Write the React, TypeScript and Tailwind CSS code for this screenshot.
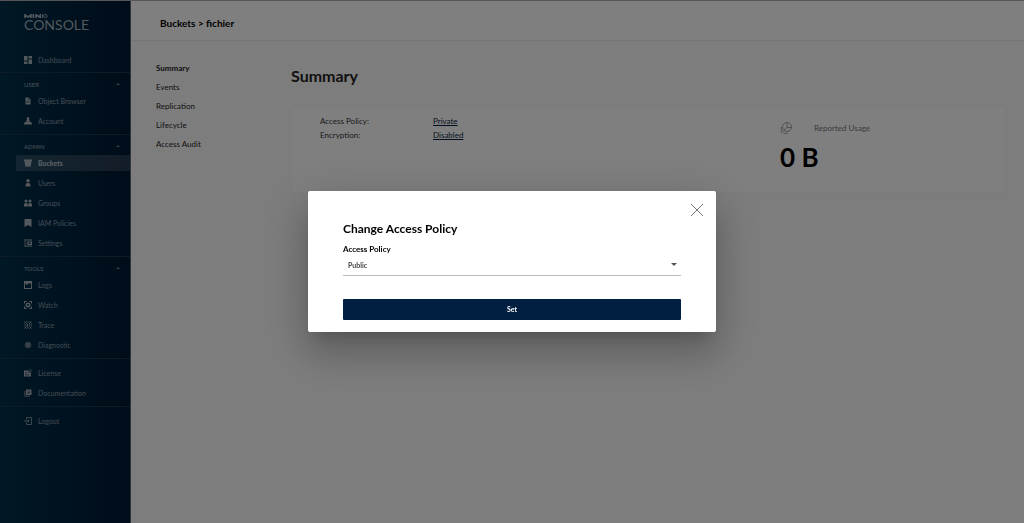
import { useState } from 'react';
import type { FormEvent, ReactNode } from 'react';

interface MenuItem {
  label: string;
  icon: ReactNode;
  active?: boolean;
}

interface MenuSection {
  title?: string;
  items: MenuItem[];
}

const MENU_SECTIONS: MenuSection[] = [
  {
    title: 'USER',
    items: [
      {
        label: 'Object Browser',
        icon: <path fillRule="evenodd" d="M3 1h6l4 4v10H3zM5 8v1h6V8zM5 11v1h4v-1zM8.500 2.500V5.500H11.500z" />,
      },
      {
        label: 'Account',
        icon: <path d="M8 0a3 3 0 0 1 2 5L12.500 9.500h-9L6 5a3 3 0 0 1 2-5zM2 10h12l2 3v2H0v-2z" />,
      },
    ],
  },
  {
    title: 'ADMIN',
    items: [
      { label: 'Buckets', active: true, icon: <path d="M0 1h16v3h-1l-1.500 11h-11L1 4H0z" /> },
      {
        label: 'Users',
        icon: <path d="M8 0a3.500 3.500 0 1 1 0 7 3.500 3.500 0 0 1 0-7zM3 15v-3q0-4 5-4t5 4v3z" />,
      },
      {
        label: 'Groups',
        icon: (
          <path d="M4 1a3 3 0 1 1 0 6 3 3 0 0 1 0-6zM12 1a3 3 0 1 1 0 6 3 3 0 0 1 0-6zM0 15v-4q0-3 4-3 3 0 3.500 2v5zM8.500 15v-5q.5-2 3.500-2 4 0 4 3v4z" />
        ),
      },
      { label: 'IAM Policies', icon: <path d="M1 0h14v16l-7-4-7 4z" /> },
      {
        label: 'Settings',
        icon: (
          <path
            fillRule="evenodd"
            d="M0 1h16v2H0zM0 5h5v1.500H0zM0 9h5v1.500H0zM0 13h16v2H0zM7 5h9v7H7zM11.500 6.500a2 2 0 1 0 0 4 2 2 0 0 0 0-4z"
          />
        ),
      },
    ],
  },
  {
    title: 'TOOLS',
    items: [
      {
        label: 'Logs',
        icon: <path fillRule="evenodd" d="M0 0h16v16H0zM2 5v9h12V5zM4 5h4v2H4z" />,
      },
      {
        label: 'Watch',
        icon: (
          <path
            fillRule="evenodd"
            d="M0 0h5v2H2v3H0zM11 0h5v5h-2V2h-3zM0 11h2v3h3v2H0zM14 11h2v5h-5v-2h3zM8 3a5 5 0 1 1 0 10 5 5 0 0 1 0-10zM8 6a2 2 0 1 0 0 4 2 2 0 0 0 0-4z"
          />
        ),
      },
      {
        label: 'Trace',
        icon: (
          <path
            d="M1 1l4 4M6 1l3 3M11 1l4 4M5 1L1 5M15 1l-5 5M1 8h4M7 6v5M10 8h5M1 11l4 4M5 11l-4 4M8 12v3M11 11l4 4M15 11l-4 4"
            fill="none"
            stroke="currentColor"
            strokeWidth="2"
          />
        ),
      },
      {
        label: 'Diagnostic',
        icon: (
          <g fill="none" stroke="currentColor" strokeWidth="1">
            <circle cx="8" cy="8" r="6" />
            <circle cx="8" cy="8" r="3.500" />
            <path d="M2 8h12M8 2v12M4 4l8 8M12 4l-8 8" />
          </g>
        ),
      },
    ],
  },
  {
    items: [
      {
        label: 'License',
        icon: (
          <>
            <path fillRule="evenodd" d="M0 3h9v4h5v8H0zM2 7v1.500h5V7zM2 11v1.500h9V11z" />
            <circle cx="12.500" cy="3.500" r="2.500" fill="none" stroke="currentColor" />
          </>
        ),
      },
      {
        label: 'Documentation',
        icon: (
          <path
            fillRule="evenodd"
            d="M4 1h11v11H4zM6.500 3.500v1.200h6V3.500zM6.500 6v1.200h6V6zM6.500 8.500v1.200h4V8.500zM1 4h1.500v9.500H12V15H1z"
          />
        ),
      },
    ],
  },
  {
    items: [
      {
        label: 'Logout',
        icon: (
          <path
            d="M5 5V1h10v14H5v-4M0 8h10M7.500 5l3 3-3 3"
            fill="none"
            stroke="currentColor"
            strokeWidth="1.500"
          />
        ),
      },
    ],
  },
];

const DASHBOARD: MenuItem = {
  label: 'Dashboard',
  icon: <path d="M0 0h7v9H0zM9 0h7v5H9zM0 11h7v5H0zM9 7h7v9H9z" />,
};

const BUCKET_TABS = ['Summary', 'Events', 'Replication', 'Lifecycle', 'Access Audit'];

function MenuLink({ item }: { item: MenuItem }) {
  return (
    <a
      href="#"
      className={`ml-4 flex h-4 items-center pl-2 text-[7px] leading-4 ${
        item.active ? 'bg-white/15 font-bold text-[#bcc6ce]' : 'text-[#8a9ba8]'
      }`}
    >
      <svg viewBox="0 0 16 16" className="mr-1.5 h-2 w-2 shrink-0 text-[#a9b2ba]" fill="currentColor" aria-hidden="true">
        {item.icon}
      </svg>
      {item.label}
    </a>
  );
}

function Logo() {
  return (
    <div className="flex h-[18px] flex-col pl-6 text-[#a3b1bc]">
      <svg viewBox="0 0 72 12" className="h-1 w-6" aria-hidden="true">
        <g fill="none" stroke="currentColor">
          <path d="M3 12V3l9 6 9-6v9M28 0v12M36 12V3l13 7V0" strokeWidth="5" />
          <path d="M56 0v12M64 1.500c-7 0-7 9 0 9s7-9 0-9z" strokeWidth="3" />
        </g>
      </svg>
      <span className="text-[14px] leading-[14px]">CONSOLE</span>
    </div>
  );
}

function Sidebar() {
  return (
    <aside className="w-[131px] shrink-0 border-r border-[#606b75] bg-linear-to-r from-[#00304a] to-[#001833] pt-[13px]">
      <Logo />
      <nav className="pt-5">
        <div className="pb-1">
          <MenuLink item={DASHBOARD} />
        </div>
        {MENU_SECTIONS.map((section, index) => (
          <div
            key={index}
            className={`flex flex-col gap-1 border-t border-[#17394f] pb-[5px] ${section.title ? 'pt-0.5' : 'pt-1.5'}`}
          >
            {section.title && (
              <button
                type="button"
                className="-mb-1 flex h-[18px] items-center justify-between pr-2.5 pl-6 text-[6px] text-[#9aa9b5]"
              >
                {section.title}
                <svg viewBox="0 0 4 4" className="h-1 w-1" fill="#6d7f8d" aria-hidden="true">
                  <path d="M0 3l2-2 2 2z" />
                </svg>
              </button>
            )}
            {section.items.map((item) => (
              <MenuLink key={item.label} item={item} />
            ))}
          </div>
        ))}
      </nav>
    </aside>
  );
}

function UsageIcon() {
  return (
    <svg viewBox="0 0 24 24" className="h-3 w-3 text-[#888]" fill="none" stroke="currentColor" strokeWidth="1.500" aria-hidden="true">
      <circle cx="14" cy="10" r="9" />
      <path d="M14 1v10h9M3 10c-3 8 5 16 13 12M14 11l-7 6M1 20h3" />
    </svg>
  );
}

function BucketSummary() {
  return (
    <main className="flex min-w-0 flex-1 flex-col bg-[#fbfbfb]">
      <header className="flex h-10 items-center border-b border-[#eaeaea] bg-white px-[29px] pt-1.5">
        <h1 className="text-[10px] font-bold text-black">Buckets &gt; fichier</h1>
      </header>

      <div className="flex flex-1 pt-[17px] pr-[18px] pl-[25px]">
        <nav className="flex w-[135px] shrink-0 flex-col pt-px">
          {BUCKET_TABS.map((tab) => (
            <a
              key={tab}
              href="#"
              className={`h-[19px] text-[8px] leading-[19px] text-[#222] ${tab === 'Summary' ? 'font-bold' : ''}`}
            >
              {tab}
            </a>
          ))}
        </nav>

        <section className="min-w-0 flex-1 pt-2">
          <h2 className="text-[16px] leading-5 font-bold text-[#222]">Summary</h2>
          <div className="mt-[21px] flex min-h-[86px] border border-[#f7f7f7] bg-white pt-1.5 pl-7">
            <dl className="grid flex-1 auto-rows-[14px] grid-cols-[113px_1fr] text-[8px] leading-[14px] text-[#333]">
              <dt>Access Policy:</dt>
              <dd>
                <button type="button" className="block leading-[14px] text-[#081c42] underline">
                  Private
                </button>
              </dd>
              <dt>Encryption:</dt>
              <dd>
                <button type="button" className="block leading-[14px] text-[#081c42] underline">
                  Disabled
                </button>
              </dd>
            </dl>
            <div className="w-[225px] pt-1.5">
              <div className="flex items-center gap-[22px] text-[8px] leading-4 text-[#777]">
                <UsageIcon />
                Reported Usage
              </div>
              <div className="pt-[5px] text-[26px] leading-8 font-bold text-black">0 B</div>
            </div>
          </div>
        </section>
      </div>
    </main>
  );
}

function AccessPolicyModal({ onClose }: { onClose: () => void }) {
  const [policy, setPolicy] = useState('public');

  const handleSubmit = (e: FormEvent) => {
    e.preventDefault();
    onClose();
  };

  return (
    <div className="fixed inset-0 flex items-center justify-center bg-black/50">
      <div
        role="dialog"
        aria-labelledby="policy-title"
        className="w-[408px] rounded-xs bg-white pt-3 pb-3 shadow-[0_11px_15px_-7px_rgba(0,0,0,0.2),0_24px_38px_3px_rgba(0,0,0,0.14),0_9px_46px_8px_rgba(0,0,0,0.12)]"
      >
        <div className="flex justify-end pr-3">
          <button type="button" onClick={onClose} aria-label="Close" className="block">
            <svg viewBox="0 0 14 14" className="h-3.5 w-3.5" fill="none" stroke="#777" aria-hidden="true">
              <path d="M1 1l12 12M13 1L1 13" />
            </svg>
          </button>
        </div>
        <form onSubmit={handleSubmit} className="flex flex-col px-[35px] pt-1">
          <h2 id="policy-title" className="text-[12px] leading-4 font-bold text-black">
            Change Access Policy
          </h2>
          <label htmlFor="policy" className="mt-1.5 text-[8px] leading-3 font-bold text-black">
            Access Policy
          </label>
          <div className="relative border-b border-[#bbb]">
            <select
              id="policy"
              value={policy}
              onChange={(e) => setPolicy(e.target.value)}
              className="block h-5 w-full appearance-none bg-transparent pl-[5px] text-[7px] font-bold text-[#444]"
            >
              <option value="public">Public</option>
              <option value="private">Private</option>
            </select>
            <svg viewBox="0 0 6 4" className="pointer-events-none absolute top-2 right-1 h-1 w-1.5" fill="#555" aria-hidden="true">
              <path d="M0 0h6L3 3z" />
            </svg>
          </div>
          <button type="submit" className="mt-[23px] h-[21px] rounded-[1px] bg-[#001f41] text-[7px] font-bold text-white">
            Set
          </button>
        </form>
      </div>
    </div>
  );
}

export default function App() {
  const [modalOpen, setModalOpen] = useState(true);

  return (
    <div className="flex min-h-screen border-t border-[#aaa] font-['Lato',sans-serif]">
      <Sidebar />
      <BucketSummary />
      {modalOpen && <AccessPolicyModal onClose={() => setModalOpen(false)} />}
    </div>
  );
}
